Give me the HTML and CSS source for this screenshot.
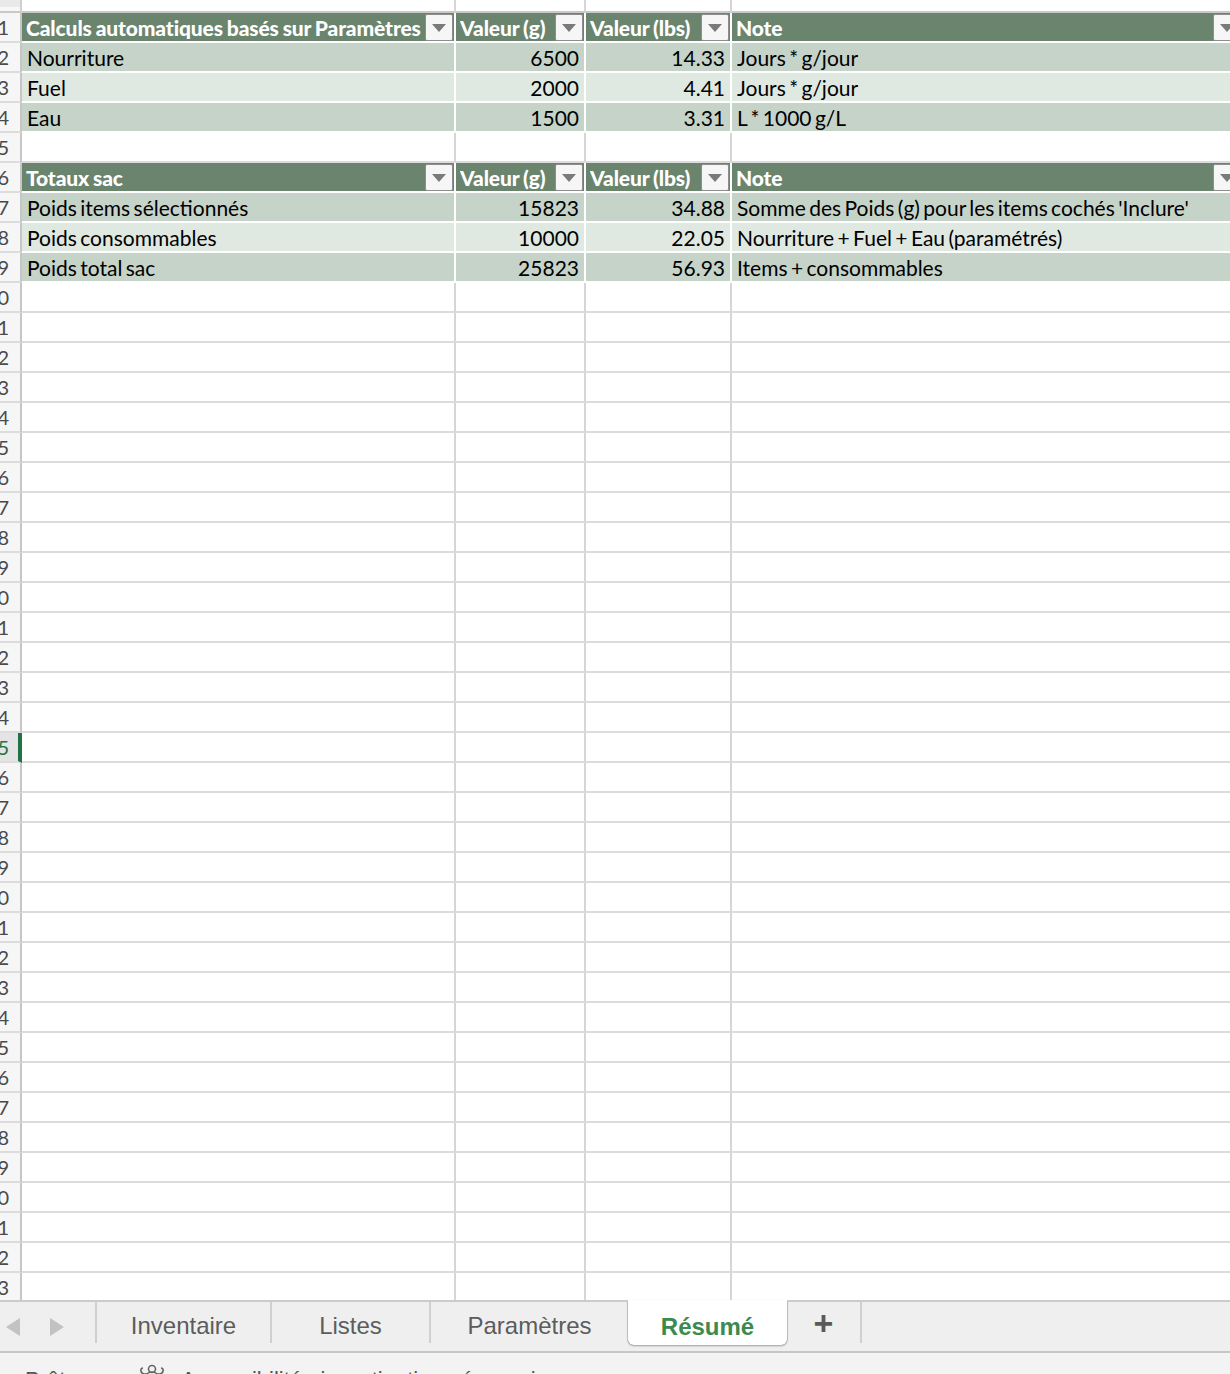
FILE: index.html
```html
<!DOCTYPE html>
<html lang="fr">
<head>
<meta charset="utf-8">
<title>Résumé</title>
<link rel="stylesheet" href="styles.css">
</head>
<body>
<div class="app">
  <div class="sheet">
    <div class="row top"><div class="cell rh"></div><div class="cell"></div><div class="cell"></div><div class="cell"></div><div class="cell"></div></div>

    <div class="row"><div class="cell rh"><span>1</span></div>
      <div class="cell th"><span class="lbl">Calculs automatiques basés sur Paramètres</span><span class="dd"></span></div>
      <div class="cell th"><span class="lbl">Valeur (g)</span><span class="dd"></span></div>
      <div class="cell th"><span class="lbl">Valeur (lbs)</span><span class="dd"></span></div>
      <div class="cell th"><span class="lbl">Note</span><span class="dd"></span></div>
    </div>
    <div class="row"><div class="cell rh"><span>2</span></div>
      <div class="cell b1">Nourriture</div><div class="cell b1 num">6500</div><div class="cell b1 num">14.33</div><div class="cell b1">Jours * g/jour</div>
    </div>
    <div class="row"><div class="cell rh"><span>3</span></div>
      <div class="cell b2">Fuel</div><div class="cell b2 num">2000</div><div class="cell b2 num">4.41</div><div class="cell b2">Jours * g/jour</div>
    </div>
    <div class="row"><div class="cell rh"><span>4</span></div>
      <div class="cell b1">Eau</div><div class="cell b1 num">1500</div><div class="cell b1 num">3.31</div><div class="cell b1">L * 1000 g/L</div>
    </div>
    <div class="row"><div class="cell rh"><span>5</span></div><div class="cell"></div><div class="cell"></div><div class="cell"></div><div class="cell"></div></div>
    <div class="row"><div class="cell rh"><span>6</span></div>
      <div class="cell th"><span class="lbl">Totaux sac</span><span class="dd"></span></div>
      <div class="cell th"><span class="lbl">Valeur (g)</span><span class="dd"></span></div>
      <div class="cell th"><span class="lbl">Valeur (lbs)</span><span class="dd"></span></div>
      <div class="cell th"><span class="lbl">Note</span><span class="dd"></span></div>
    </div>
    <div class="row"><div class="cell rh"><span>7</span></div>
      <div class="cell b1">Poids items sélectionnés</div><div class="cell b1 num">15823</div><div class="cell b1 num">34.88</div><div class="cell b1">Somme des Poids (g) pour les items cochés 'Inclure'</div>
    </div>
    <div class="row"><div class="cell rh"><span>8</span></div>
      <div class="cell b2">Poids consommables</div><div class="cell b2 num">10000</div><div class="cell b2 num">22.05</div><div class="cell b2">Nourriture + Fuel + Eau (paramétrés)</div>
    </div>
    <div class="row"><div class="cell rh"><span>9</span></div>
      <div class="cell b1">Poids total sac</div><div class="cell b1 num">25823</div><div class="cell b1 num">56.93</div><div class="cell b1">Items + consommables</div>
    </div>

    <div class="row"><div class="cell rh"><span>10</span></div><div class="cell"></div><div class="cell"></div><div class="cell"></div><div class="cell"></div></div>
    <div class="row"><div class="cell rh"><span>11</span></div><div class="cell"></div><div class="cell"></div><div class="cell"></div><div class="cell"></div></div>
    <div class="row"><div class="cell rh"><span>12</span></div><div class="cell"></div><div class="cell"></div><div class="cell"></div><div class="cell"></div></div>
    <div class="row"><div class="cell rh"><span>13</span></div><div class="cell"></div><div class="cell"></div><div class="cell"></div><div class="cell"></div></div>
    <div class="row"><div class="cell rh"><span>14</span></div><div class="cell"></div><div class="cell"></div><div class="cell"></div><div class="cell"></div></div>
    <div class="row"><div class="cell rh"><span>15</span></div><div class="cell"></div><div class="cell"></div><div class="cell"></div><div class="cell"></div></div>
    <div class="row"><div class="cell rh"><span>16</span></div><div class="cell"></div><div class="cell"></div><div class="cell"></div><div class="cell"></div></div>
    <div class="row"><div class="cell rh"><span>17</span></div><div class="cell"></div><div class="cell"></div><div class="cell"></div><div class="cell"></div></div>
    <div class="row"><div class="cell rh"><span>18</span></div><div class="cell"></div><div class="cell"></div><div class="cell"></div><div class="cell"></div></div>
    <div class="row"><div class="cell rh"><span>19</span></div><div class="cell"></div><div class="cell"></div><div class="cell"></div><div class="cell"></div></div>
    <div class="row"><div class="cell rh"><span>20</span></div><div class="cell"></div><div class="cell"></div><div class="cell"></div><div class="cell"></div></div>
    <div class="row"><div class="cell rh"><span>21</span></div><div class="cell"></div><div class="cell"></div><div class="cell"></div><div class="cell"></div></div>
    <div class="row"><div class="cell rh"><span>22</span></div><div class="cell"></div><div class="cell"></div><div class="cell"></div><div class="cell"></div></div>
    <div class="row"><div class="cell rh"><span>23</span></div><div class="cell"></div><div class="cell"></div><div class="cell"></div><div class="cell"></div></div>
    <div class="row"><div class="cell rh"><span>24</span></div><div class="cell"></div><div class="cell"></div><div class="cell"></div><div class="cell"></div></div>
    <div class="row"><div class="cell rh sel"><span>25</span></div><div class="cell"></div><div class="cell"></div><div class="cell"></div><div class="cell"></div></div>
    <div class="row"><div class="cell rh"><span>26</span></div><div class="cell"></div><div class="cell"></div><div class="cell"></div><div class="cell"></div></div>
    <div class="row"><div class="cell rh"><span>27</span></div><div class="cell"></div><div class="cell"></div><div class="cell"></div><div class="cell"></div></div>
    <div class="row"><div class="cell rh"><span>28</span></div><div class="cell"></div><div class="cell"></div><div class="cell"></div><div class="cell"></div></div>
    <div class="row"><div class="cell rh"><span>29</span></div><div class="cell"></div><div class="cell"></div><div class="cell"></div><div class="cell"></div></div>
    <div class="row"><div class="cell rh"><span>30</span></div><div class="cell"></div><div class="cell"></div><div class="cell"></div><div class="cell"></div></div>
    <div class="row"><div class="cell rh"><span>31</span></div><div class="cell"></div><div class="cell"></div><div class="cell"></div><div class="cell"></div></div>
    <div class="row"><div class="cell rh"><span>32</span></div><div class="cell"></div><div class="cell"></div><div class="cell"></div><div class="cell"></div></div>
    <div class="row"><div class="cell rh"><span>33</span></div><div class="cell"></div><div class="cell"></div><div class="cell"></div><div class="cell"></div></div>
    <div class="row"><div class="cell rh"><span>34</span></div><div class="cell"></div><div class="cell"></div><div class="cell"></div><div class="cell"></div></div>
    <div class="row"><div class="cell rh"><span>35</span></div><div class="cell"></div><div class="cell"></div><div class="cell"></div><div class="cell"></div></div>
    <div class="row"><div class="cell rh"><span>36</span></div><div class="cell"></div><div class="cell"></div><div class="cell"></div><div class="cell"></div></div>
    <div class="row"><div class="cell rh"><span>37</span></div><div class="cell"></div><div class="cell"></div><div class="cell"></div><div class="cell"></div></div>
    <div class="row"><div class="cell rh"><span>38</span></div><div class="cell"></div><div class="cell"></div><div class="cell"></div><div class="cell"></div></div>
    <div class="row"><div class="cell rh"><span>39</span></div><div class="cell"></div><div class="cell"></div><div class="cell"></div><div class="cell"></div></div>
    <div class="row"><div class="cell rh"><span>40</span></div><div class="cell"></div><div class="cell"></div><div class="cell"></div><div class="cell"></div></div>
    <div class="row"><div class="cell rh"><span>41</span></div><div class="cell"></div><div class="cell"></div><div class="cell"></div><div class="cell"></div></div>
    <div class="row"><div class="cell rh"><span>42</span></div><div class="cell"></div><div class="cell"></div><div class="cell"></div><div class="cell"></div></div>
    <div class="row"><div class="cell rh"><span>43</span></div><div class="cell"></div><div class="cell"></div><div class="cell"></div><div class="cell"></div></div>
  </div>

  <div class="tabbar">
    <div class="nav">
      <svg class="arrow" width="14" height="18" viewBox="0 0 14 18"><path d="M14 0 L0 9 L14 18 Z" fill="#c2c2c2"/></svg>
      <svg class="arrow" width="14" height="18" viewBox="0 0 14 18"><path d="M0 0 L14 9 L0 18 Z" fill="#c2c2c2"/></svg>
    </div>
    <div class="tab w175">Inventaire</div>
    <div class="tab w159">Listes</div>
    <div class="tab w197 nosep">Paramètres</div>
    <div class="tab w159 active">Résumé</div>
    <div class="tab w75 plus">+</div>
  </div>

  <div class="status">
    <span class="st-ready">Prêt</span>
    <svg class="st-icon" width="30" height="30" viewBox="0 0 30 30"><g fill="none" stroke="#666" stroke-width="1.6"><circle cx="15" cy="6" r="3.5"/><path d="M6 5 C3 5 3 10 7 11 L11 11"/><path d="M24 5 C27 5 27 10 23 11 L19 11"/><circle cx="15" cy="17" r="8"/></g></svg>
    <span class="st-acc">Accessibilité : investigation nécessaire</span>
  </div>
</div>
</body>
</html>
```

FILE: styles.css
```css
html, body {
  margin: 0;
  padding: 0;
}
body {
  width: 1230px;
  height: 1374px;
  overflow: hidden;
  background: #ffffff;
  font-family: Lato, "Noto Sans", sans-serif;
}
.app {
  width: 1230px;
  height: 1374px;
  display: flex;
  flex-direction: column;
  overflow: hidden;
}
.sheet {
  height: 1300px;
  flex: none;
  overflow: hidden;
}
.row {
  display: grid;
  grid-template-columns: 22px 434px 130px 146px 512px;
  height: 30px;
}
.row.top {
  height: 13px;
}
.cell {
  box-sizing: border-box;
  border-right: 2px solid #d6d6d6;
  border-bottom: 2px solid #dcdcdc;
  display: flex;
  align-items: center;
  padding: 0 5px;
  font-size: 21px;
  color: #000;
  white-space: nowrap;
  overflow: hidden;
  word-spacing: -2px;
}
.row.top .cell {
  border-bottom-color: #c9c9c9;
}
.row.top .rh {
  background: linear-gradient(#e9e9e9 0 7px, #f7f7f7 7px);
  border-right-color: #cfcfcf;
}
.rh {
  background: #f6f6f6;
  border-right: 2px solid #c6c6c6;
  justify-content: flex-end;
  padding: 0 11px 0 0;
  color: #4a4a4a;
  font-size: 20px;
}
.rh.sel {
  border-right: 4px solid #217346;
  padding-right: 9px;
  background: #e4e4e4;
  color: #217346;
}
.th {
  background: #6a846e;
  color: #ffffff;
  font-weight: 900;
  border-right-color: #ffffff;
  border-bottom-color: #ffffff;
  padding: 0 1px 0 4px;
  letter-spacing: -0.12px;
  word-spacing: -1px;
}
.th .lbl {
  flex: 1;
  overflow: hidden;
}
.dd {
  flex: none;
  box-sizing: border-box;
  width: 28px;
  height: 27px;
  border: 1px solid #8d8d8d;
  border-radius: 2px;
  background: #f6f6f6;
  position: relative;
}
.dd::after {
  content: "";
  position: absolute;
  left: 6px;
  top: 9px;
  border-left: 7px solid transparent;
  border-right: 7px solid transparent;
  border-top: 8px solid #7a7a7a;
}
.b1 {
  background: #c6d3c9;
  border-right-color: #ffffff;
  border-bottom-color: #ffffff;
}
.b2 {
  background: #e0e8e2;
  border-right-color: #ffffff;
  border-bottom-color: #ffffff;
}
.num {
  justify-content: flex-end;
  padding-right: 5px;
}

/* sheet tabs */
.tabbar {
  height: 53px;
  flex: none;
  box-sizing: border-box;
  border-top: 2px solid #cbcbcb;
  border-bottom: 2px solid #c6c6c6;
  background: #efefef;
  display: flex;
  font-family: "Liberation Sans", Arial, sans-serif;
  font-size: 24px;
  color: #5c5c5c;
}
.nav {
  width: 97px;
  display: flex;
  align-items: center;
  gap: 30px;
  padding-left: 6px;
  box-sizing: border-box;
  border-right: 2px solid #d0d0d0;
  margin-bottom: 8px;
  padding-top: 8px;
}
.tab {
  box-sizing: border-box;
  display: flex;
  align-items: center;
  justify-content: center;
  border-right: 2px solid #d0d0d0;
  margin-bottom: 8px;
  padding-top: 6px;
}
.tab.nosep {
  border-right: none;
}
.w175 { width: 175px; }
.w159 { width: 159px; }
.w197 { width: 197px; }
.w75 { width: 75px; }
.tab.active {
  background: #ffffff;
  color: #3b8a4f;
  font-weight: bold;
  border-right: none;
  border-radius: 0 0 6px 6px;
  box-shadow: 0 1px 2px rgba(0, 0, 0, 0.35), -1px 0 0 #d0d0d0, 1px 0 0 #d0d0d0;
  margin-top: -2px;
  margin-bottom: 6px;
  padding-top: 8px;
}
.tab.plus {
  font-size: 34px;
  font-weight: bold;
  color: #5a5a5a;
  padding-top: 2px;
}

/* status bar */
.status {
  flex: 1;
  background: #f3f3f3;
  display: flex;
  align-items: flex-start;
  padding: 14px 0 0 25px;
  font-family: "Liberation Sans", Arial, sans-serif;
  font-size: 22px;
  line-height: 25px;
  color: #555;
  white-space: nowrap;
  overflow: hidden;
}
.st-ready {
  width: 112px;
}
.st-icon {
  margin-top: -4px;
  margin-right: 14px;
}
```
